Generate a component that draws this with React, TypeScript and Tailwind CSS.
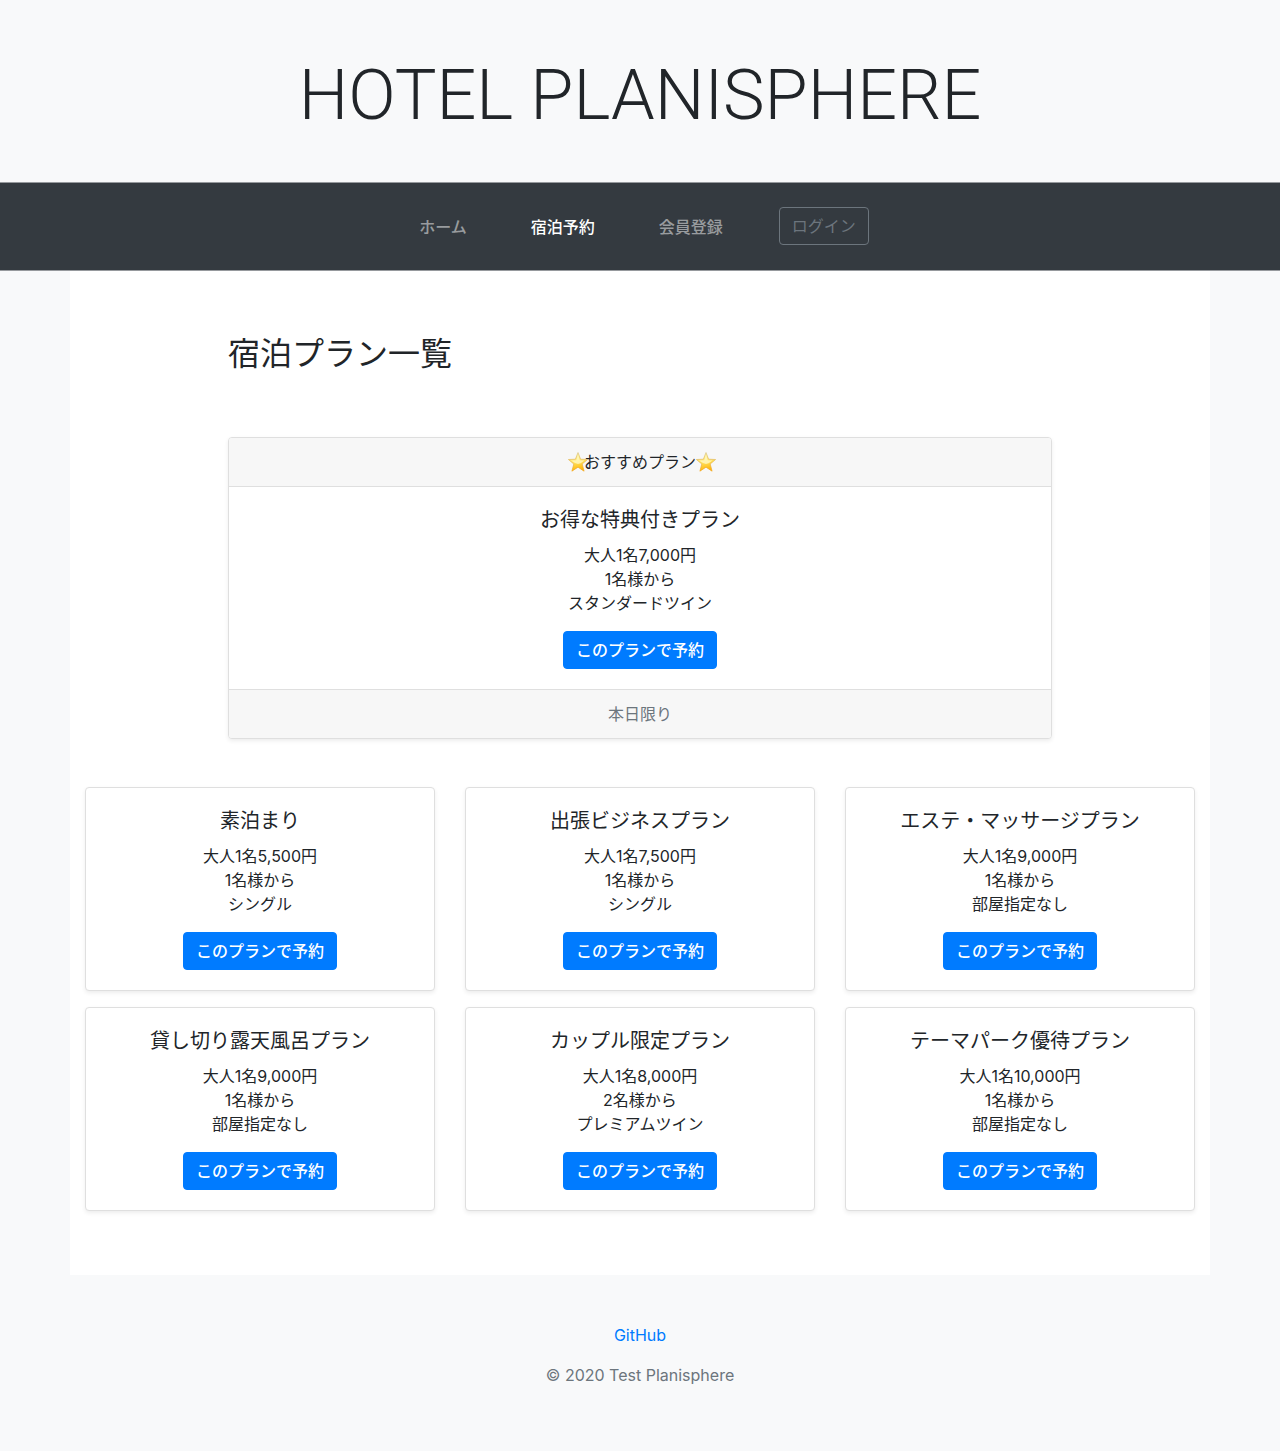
const page = "min-h-screen bg-[#f8f9fa] font-['Inter','Noto_Sans_CJK_JP',sans-serif] text-base leading-6 text-[#212529]";

type Plan = { name: string; price: string; people: string; room: string };

const recommended: Plan = { name: 'お得な特典付きプラン', price: '大人1名7,000円', people: '1名様から', room: 'スタンダードツイン' };

const plans: Plan[] = [
  { name: '素泊まり', price: '大人1名5,500円', people: '1名様から', room: 'シングル' },
  { name: '出張ビジネスプラン', price: '大人1名7,500円', people: '1名様から', room: 'シングル' },
  { name: 'エステ・マッサージプラン', price: '大人1名9,000円', people: '1名様から', room: '部屋指定なし' },
  { name: '貸し切り露天風呂プラン', price: '大人1名9,000円', people: '1名様から', room: '部屋指定なし' },
  { name: 'カップル限定プラン', price: '大人1名8,000円', people: '2名様から', room: 'プレミアムツイン' },
  { name: 'テーマパーク優待プラン', price: '大人1名10,000円', people: '1名様から', room: '部屋指定なし' },
];

function Star() {
  return (
    <svg viewBox="0 0 20 20" className="size-5 shrink-0" aria-hidden="true">
      <defs>
        <linearGradient id="star" x1="0.3" y1="0" x2="0.5" y2="1">
          <stop offset="0" stopColor="#fff3a0" />
          <stop offset="0.5" stopColor="#ffe25c" />
          <stop offset="1" stopColor="#ffb000" />
        </linearGradient>
        <linearGradient id="star-edge" x1="0" y1="0" x2="0" y2="1">
          <stop offset="0" stopColor="#d8c486" />
          <stop offset="1" stopColor="#f2a51c" />
        </linearGradient>
      </defs>
      <path d="M10 .5l2.6 6.7 7 .3-5.4 4.5 1.9 7.2L10 15.2l-6.1 4 1.9-7.2L.4 7.5l7-.3z" fill="url(#star)" stroke="url(#star-edge)" strokeWidth=".7" strokeLinejoin="round" />
      <path d="M10 2.6l1.8 5.6 4.6.4-3.8 2.6L10 12l-3-1L3 8.4l5.2-.2z" fill="#fffbd2" opacity=".7" />
    </svg>
  );
}

function PlanBody({ plan }: { plan: Plan }) {
  return (
    <div className="flex flex-col items-center p-5 text-center">
      <h5 className="mb-2.5 text-xl leading-[26px]">{plan.name}</h5>
      <ul className="mb-4">
        <li>{plan.price}</li>
        <li>{plan.people}</li>
        <li>{plan.room}</li>
      </ul>
      <a href="#reserve" className="rounded border border-[#007bff] bg-[#007bff] px-3 py-1.5 font-medium text-white">
        このプランで予約
      </a>
    </div>
  );
}

const card = 'overflow-hidden rounded border border-[#dfdfdf] bg-white shadow-[0_2px_4px_rgba(0,0,0,0.075)]';

export default function App() {
  return (
    <div className={page}>
      <header className="px-4 pt-[52px] pb-11 text-center">
        <h1 className="font-['Roboto',sans-serif] text-[70px] leading-[86px] font-light">HOTEL PLANISPHERE</h1>
      </header>
      <nav className="flex items-center justify-center border-y border-[#96999d] bg-[#343a40] px-4 pt-6 pb-[23px]">
        <ul className="flex items-start">
          <li className="mr-12"><a href="#home" className="block p-2 font-medium text-white/50">ホーム</a></li>
          <li className="mr-12"><a href="#plans" className="block p-2 font-medium text-white">宿泊予約</a></li>
          <li className="mr-12"><a href="#signup" className="block p-2 font-medium text-white/50">会員登録</a></li>
          <li><button type="button" className="rounded border border-[#6c757d] px-3 py-1.5 text-[#6c757d]">ログイン</button></li>
        </ul>
      </nav>
      <main className="mx-auto max-w-[1140px] bg-white px-[15px] pt-16 pb-12">
        <div className="mx-auto max-w-[824px]">
          <h2 className="mb-16 text-[32px] leading-[38px]">宿泊プラン一覧</h2>
          <section className={card}>
            <div className="flex items-center justify-center border-b border-[#dfdfdf] bg-[#f7f7f7] px-5 py-3">
              <span className="-mr-1 ml-1"><Star /></span>おすすめプラン<Star />
            </div>
            <PlanBody plan={recommended} />
            <div className="border-t border-[#dfdfdf] bg-[#f7f7f7] px-5 py-3 text-center text-[#6c757d]">本日限り</div>
          </section>
        </div>
        <div className="mt-12 grid grid-cols-3 gap-x-[30px] gap-y-4 pb-4">
          {plans.map((plan) => (
            <section key={plan.name} className={card}><PlanBody plan={plan} /></section>
          ))}
        </div>
      </main>
      <footer className="px-4 pt-12 pb-11 text-center">
        <p className="mb-4"><a href="#github" className="text-[#007bff]">GitHub</a></p>
        <p className="mb-4 text-[#6c757d]">© 2020 Test Planisphere</p>
      </footer>
    </div>
  );
}
